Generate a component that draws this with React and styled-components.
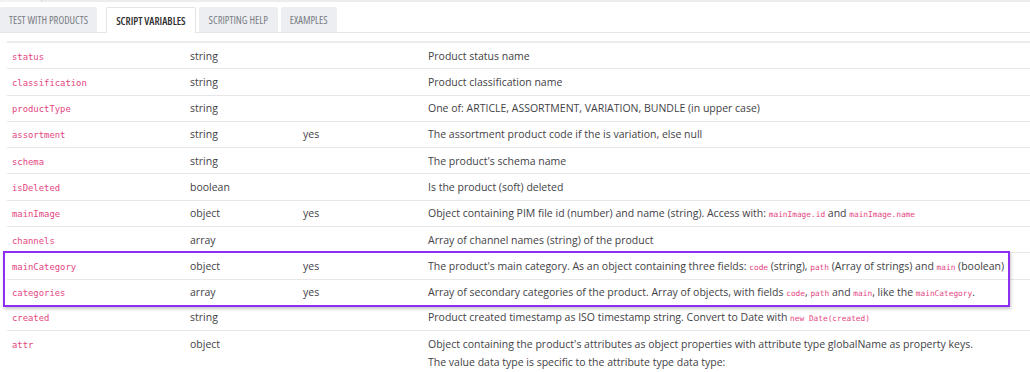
import React from "react";
import styled, { createGlobalStyle } from "styled-components";

const SANS = `"Open Sans", Roboto, "Liberation Sans", sans-serif`;
const MONO = `"DejaVu Sans Mono", "Liberation Mono", monospace`;

const Global = createGlobalStyle`
  html, body { margin: 0; padding: 0; background: #fff; }
  body { font-family: ${SANS}; overflow: hidden; }
`;

const Page = styled.div`
  width: 1030px;
  height: 372px;
  overflow: hidden;
  background: #fff;
`;

const TopEdge = styled.div`
  display: flex;
  height: 2px;
`;

const TopEdgeLeft = styled.div`
  width: 41px;
  border-right: 1px solid #d8d8d8;
  background: #f2f2f2;
`;

const TopEdgeRest = styled.div`
  flex: 1;
  background: #ececec;
`;

const TabBar = styled.div`
  display: flex;
  align-items: flex-end;
  gap: 3px;
  margin-top: 5px;
  height: 25px;
  border-bottom: 1px solid #e6e6e6;
`;

const Tab = styled.div`
  box-sizing: border-box;
  display: flex;
  align-items: center;
  padding: 0 ${(p) => p.$pad}px;
  font-family: ${SANS};
  font-stretch: 75%;
  font-size: 10.6px;
  text-transform: uppercase;
  background: ${(p) => (p.$active ? "#fff" : "#eceef2")};
  color: ${(p) => (p.$active ? "#2d2d2d" : "#7a7d83")};
  font-weight: ${(p) => (p.$active ? 600 : 400)};
  border: 1px solid ${(p) => (p.$active ? "#e4e4e4" : "transparent")};
  border-bottom: none;
  border-radius: 2px 2px 0 0;
  margin-bottom: ${(p) => (p.$active ? "-1px" : "0")};
  height: ${(p) => (p.$active ? "26px" : "25px")};
  margin-left: ${(p) => (p.$active ? "6px" : "0")};
`;

const Table = styled.div`
  margin: 8px 0 0 7px;
  border-top: 2px solid #ececec;
`;

const Row = styled.div`
  display: grid;
  grid-template-columns: 183px 113px 125px 1fr;
  border-bottom: 1px solid #e7e7e7;
  padding: 3.5px 0 3.6px;
  line-height: 18.2px;
  font-family: ${SANS};
  font-stretch: 90%;
  font-size: 10.5px;
  color: #3f4246;
  &:last-child { border-bottom: none; }
`;

const Cell = styled.div`
  padding-left: ${(p) => p.$pad || 0}px;
  white-space: nowrap;
`;

const Name = styled.span`
  font-family: ${MONO};
  font-stretch: 100%;
  font-size: 8.9px;
  line-height: 1;
  color: #e4457f;
`;

const Code = styled.span`
  font-family: ${MONO};
  font-stretch: 100%;
  font-size: 7.8px;
  line-height: 1;
  color: #e4457f;
`;

const Highlight = styled.div`
  position: relative;
  &::after {
    content: "";
    position: absolute;
    left: -4px;
    right: 20px;
    top: -2px;
    bottom: -2px;
    border: 2px solid #8b30f2;
    box-shadow: 1px 2px 3px rgba(0, 0, 0, 0.22);
    pointer-events: none;
  }
`;

const rows1 = [
  ["status", "string", "", "Product status name"],
  ["classification", "string", "", "Product classification name"],
  ["productType", "string", "", "One of: ARTICLE, ASSORTMENT, VARIATION, BUNDLE (in upper case)"],
  ["assortment", "string", "yes", "The assortment product code if the is variation, else null"],
  ["schema", "string", "", "The product's schema name"],
  ["isDeleted", "boolean", "", "Is the product (soft) deleted"],
  [
    "mainImage",
    "object",
    "yes",
    <>
      Object containing PIM file id (number) and name (string). Access with: <Code>mainImage.id</Code> and{" "}
      <Code>mainImage.name</Code>
    </>,
  ],
  ["channels", "array", "", "Array of channel names (string) of the product"],
];

const rowsHi = [
  [
    "mainCategory",
    "object",
    "yes",
    <>
      The product's main category. As an object containing three fields: <Code>code</Code> (string),{" "}
      <Code>path</Code> (Array of strings) and <Code>main</Code> (boolean)
    </>,
  ],
  [
    "categories",
    "array",
    "yes",
    <>
      Array of secondary categories of the product. Array of objects, with fields <Code>code</Code>,{" "}
      <Code>path</Code> and <Code>main</Code>, like the <Code>mainCategory</Code>.
    </>,
  ],
];

const rows2 = [
  [
    "created",
    "string",
    "",
    <>
      Product created timestamp as ISO timestamp string. Convert to Date with <Code>new Date(created)</Code>
    </>,
  ],
  [
    "attr",
    "object",
    "",
    <>
      Object containing the product's attributes as object properties with attribute type globalName as property keys.
      <br />
      The value data type is specific to the attribute type data type:
    </>,
  ],
];

const VarRow = ({ r }) => (
  <Row>
    <Cell $pad={5}>
      <Name>{r[0]}</Name>
    </Cell>
    <Cell>{r[1]}</Cell>
    <Cell>{r[2]}</Cell>
    <Cell>{r[3]}</Cell>
  </Row>
);

export default function App() {
  return (
    <Page>
      <Global />
      <TopEdge>
        <TopEdgeLeft />
        <TopEdgeRest />
      </TopEdge>
      <TabBar>
        <Tab $pad={8}>Test with products</Tab>
        <Tab $active $pad={9}>Script variables</Tab>
        <Tab $pad={9}>Scripting help</Tab>
        <Tab $pad={8}>Examples</Tab>
      </TabBar>
      <Table>
        {rows1.map((r) => (
          <VarRow key={r[0]} r={r} />
        ))}
        <Highlight>
          {rowsHi.map((r) => (
            <VarRow key={r[0]} r={r} />
          ))}
        </Highlight>
        {rows2.map((r) => (
          <VarRow key={r[0]} r={r} />
        ))}
      </Table>
    </Page>
  );
}
